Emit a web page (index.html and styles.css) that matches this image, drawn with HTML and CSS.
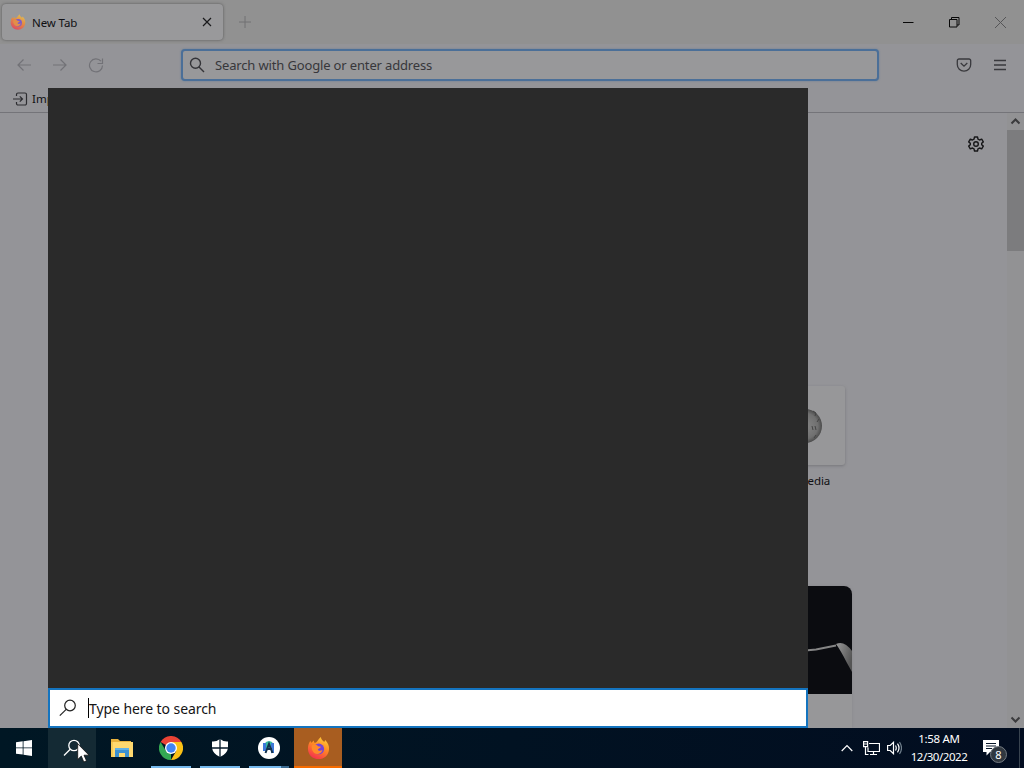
FILE: index.html
```
<!DOCTYPE html>
<html lang="en">
<head>
<meta charset="utf-8">
<title>New Tab</title>
<link rel="stylesheet" href="styles.css">
</head>
<body>
<svg class="defs" width="0" height="0">
  <defs>
    <linearGradient id="flame" x1="0.8" y1="0" x2="0.3" y2="1"><stop offset="0" stop-color="#ffd43b"/><stop offset=".45" stop-color="#ff8a24"/><stop offset="1" stop-color="#f52f4f"/></linearGradient>
    <symbol id="firefox" viewBox="0 0 24 24">
      <path fill="url(#flame)" d="M3.5 4.5c.2 1 .7 1.7 1.2 2.1L7 4.2c.1 1.3.5 2.2 1.2 2.7C10.5 6 11.500 3 14.500 0.500c.2 2.700 2 3.700 3.500 5.200l1-2c3 3.200 4.200 6 4 9.500C22.700 19.200 18 23.600 12 23.600S1 19 1 12.800C1 9.300 2 6.700 3.500 4.500z"/>
      <circle cx="12.300" cy="13" r="5.600" fill="#7544d8"/>
      <path fill="#ff8b2a" d="M5 9.500c3-2 5-.8 6.500.6l3 .6c-.3 1.600-3 1.700-3.300 3.100 1.300 1.900 3.600.9 5 .3-1.200 4-5.600 5.400-8.700 3C5.200 15.300 4.500 12.400 5 9.500z"/>
    </symbol>
  </defs>
</svg>
<div class="screen">
  <main class="browser">
    <div class="tabbar">
      <div class="tab">
        <svg class="tab-icon" width="16" height="16"><use href="#firefox"/></svg>
        <span class="tab-title">New Tab</span>
        <svg class="tab-close" width="10" height="10" viewBox="0 0 10 10"><path d="M1 1l8 8M9 1L1 9"/></svg>
      </div>
      <svg class="tab-add" width="12" height="12" viewBox="0 0 12 12"><path d="M6 0v12M0 6h12"/></svg>
      <div class="window-controls">
        <svg width="11" height="11" viewBox="0 0 11 11"><path d="M0 5.500h10.500"/></svg>
        <svg width="11" height="11" viewBox="0 0 11 11"><path d="M.5 2.500h7.500v7.500H.5zM2.500 2.500V.5H10v7.500H8"/></svg>
        <svg class="faded" width="11" height="11" viewBox="0 0 11 11"><path d="M0 0l11 11M11 0L0 11"/></svg>
      </div>
    </div>
    <div class="navbar">
      <div class="nav-buttons">
        <svg width="16" height="16" viewBox="0 0 16 16"><path d="M15 8H2M7.500 2.500L2 8l5.500 5.500"/></svg>
        <svg width="16" height="16" viewBox="0 0 16 16"><path d="M1 8h13M8.500 2.500L14 8l-5.500 5.500"/></svg>
        <svg width="16" height="16" viewBox="0 0 16 16"><path d="M13 4.200A6.500 6.500 0 1 0 14.500 8.500M14.500 1.500v5h-5"/></svg>
      </div>
      <div class="urlbar">
        <svg width="16" height="16" viewBox="0 0 16 16"><circle cx="6.500" cy="6.300" r="5"/><path d="M10 10l5 5"/></svg>
        <span>Search with Google or enter address</span>
      </div>
      <div class="nav-tools">
        <svg width="16" height="16" viewBox="0 0 16 16"><path d="M3 2h10a1.700 1.700 0 0 1 1.700 1.700V7.500a6.700 6.700 0 0 1-13.400 0V3.700A1.700 1.700 0 0 1 3 2zM4.700 6L8 9.200 11.300 6"/></svg>
        <svg width="16" height="16" viewBox="0 0 16 16"><path d="M2 3.500h12M2 8h12M2 12.500h12"/></svg>
      </div>
    </div>
    <div class="bookmarks">
      <svg width="16" height="16" viewBox="0 0 16 16"><path d="M4.500 5V3.500A1.500 1.500 0 0 1 6 2h7a1.500 1.500 0 0 1 1.500 1.500v9A1.500 1.500 0 0 1 13 14H6a1.500 1.500 0 0 1-1.500-1.500V11M1 8h9.500M7.800 5.300L10.500 8l-2.700 2.700"/></svg>
      <span>Import bookmarks…</span>
    </div>
    <div class="page">
      <div class="content">
        <svg class="gear" width="16" height="16" viewBox="0 0 16 16"><path d="M6.500 1h3l.5 2.200 1.500.8 2.200-.8 1.600 2.700L13.700 7.300v1.400l1.600 1.400-1.600 2.700-2.200-.8-1.500.8-.5 2.200h-3L6 12.800 4.500 12l-2.200.8L.7 10.100l1.600-1.400V7.300L.7 5.900l1.600-2.700 2.200.8L6 3.200z"/><circle cx="8" cy="8" r="2.300"/></svg>
        <div class="site">
          <div class="site-tile">
            <svg width="38" height="36" viewBox="0 0 38 36"><defs><radialGradient id="globe"><stop offset="0" stop-color="#858585"/><stop offset=".75" stop-color="#707070"/><stop offset="1" stop-color="#4b4b4b"/></radialGradient></defs><ellipse cx="19" cy="18" rx="17" ry="17" fill="url(#globe)"/><path d="M27 3l3 2-1 3M26 18l1 4M29 18l1 4M33 11l-2 3M28 30l2-3" stroke="#444" fill="none"/></svg>
          </div>
          <span>wikipedia</span>
        </div>
        <article class="story">
          <svg width="212" height="108" viewBox="0 0 212 108"><defs><linearGradient id="arm" x1="0" y1="0" x2="1" y2=".5"><stop offset="0" stop-color="#999"/><stop offset="1" stop-color="#555"/></linearGradient></defs><rect width="212" height="108" fill="#0b0c10"/><path d="M160 65l16-1.500 20-4" stroke="#858585" stroke-width="2" fill="none"/><path d="M196 58q8-4 16 7v21l-5-9q-6-12-11-19z" fill="url(#arm)"/></svg>
        </article>
      </div>
      <div class="scrollbar">
        <svg width="17" height="17" viewBox="0 0 17 17"><path d="M4.500 10.500l4-4 4 4"/></svg>
        <div class="thumb"></div>
        <svg width="17" height="17" viewBox="0 0 17 17"><path d="M4.500 6.500l4 4 4-4"/></svg>
      </div>
    </div>
  </main>
  <section class="search-panel">
    <div class="search-results"></div>
    <div class="search-box">
      <svg width="18" height="18" viewBox="0 0 18 18"><circle cx="11" cy="6.500" r="5.300"/><path d="M7.200 10.300L.8 16.700"/></svg>
      <i class="caret"></i><span>Type here to search</span>
    </div>
  </section>
  <footer class="taskbar">
    <div class="task">
      <svg width="16" height="16" viewBox="0 0 16 16" fill="#fff"><path d="M0 2.300L6.700 1.300v6.200H0zM7.500 1.200L16 0v7.500H7.500zM0 8.300h6.700v6.300L0 13.700zM7.500 8.300H16V16l-8.500-1.200z"/></svg>
    </div>
    <div class="task hover">
      <svg width="18" height="18" viewBox="0 0 18 18" fill="none" stroke="#fff" stroke-width="1.300"><circle cx="11" cy="6.500" r="5.200"/><path d="M7.200 10.300L1 16.500"/></svg>
      <svg class="cursor" width="13" height="20" viewBox="0 0 13 20"><path d="M.7.800v15.700l3.600-3.400 2.500 5.900 2.700-1.200-2.500-5.600h5z" fill="#fff" stroke="#111" stroke-width=".8"/></svg>
    </div>
    <div class="task explorer">
      <svg width="22" height="20" viewBox="0 0 22 20"><path fill="#e9b23c" d="M0 1h7l2 2h11v3H0z"/><path fill="#ffd96f" d="M0 4h22v15H0z"/><path fill="#f7ca55" d="M0 4h2v15H0z"/><path fill="#3d91d0" d="M4 19v-8h14v8h-4v-4H8v4z"/><path fill="#62b2e5" d="M4 10h14v2H4z"/></svg>
    </div>
    <div class="task running">
      <svg width="24" height="24" viewBox="0 0 24 24"><path fill="#e94335" d="M12 12L1.600 6A12 12 0 0 1 22.400 6z"/><path fill="#34a853" d="M12 12v12A12 12 0 0 1 1.600 6L7 15z"/><path fill="#fbc116" d="M12 6h10.400A12 12 0 0 1 12 24l5.200-9z"/><circle cx="12" cy="12" r="6" fill="#fff"/><circle cx="12" cy="12" r="4.700" fill="#4285f4"/></svg>
    </div>
    <div class="task running">
      <svg width="18" height="20" viewBox="0 0 18 20"><path fill="#fff" d="M9 1q4 3 8 2.500V10q-1 6-8 9-7-3-8-9V3.500Q5 4 9 1z"/><path d="M9 1v18M1 10h16" stroke="#071b2b" stroke-width="1.300"/></svg>
    </div>
    <div class="task running grouped">
      <svg width="22" height="22" viewBox="0 0 22 22"><circle cx="11" cy="11" r="11" fill="#fff"/><path fill="#36b8a0" d="M6 7q5-6 10 0v6H6z"/><path fill="#3d78d8" d="M5 6h3v8H5zM13 6h3v10h-3z"/><path d="M7.500 16L11 7l3.500 9M9 12h5" fill="none" stroke="#14324c" stroke-width="2"/></svg>
    </div>
    <div class="task active">
      <svg width="23" height="24"><use href="#firefox"/></svg>
    </div>
    <div class="tray">
      <svg class="chevron" width="12" height="8" viewBox="0 0 12 8"><path d="M.7 7L6 1.500 11.300 7"/></svg>
      <svg class="network" width="17" height="15" viewBox="0 0 17 15"><path d="M6 2.500h10.500v8H5V6.500M10.500 10.500v3M7 13.500h7M.6.600h4v5h-4zM2.500 5.600v7.900h3M1 3h3"/></svg>
      <svg class="volume" width="15" height="14" viewBox="0 0 15 14"><path d="M.6 4.500h2.600L6.500 1.300v11.400L3.200 9.500H.6zM8.500 4.500q1.500 2.500 0 5M10.500 2.700q3 4.300 0 8.600"/><path class="dim" d="M12.500 1q4 6 0 12"/></svg>
      <div class="clock"><span class="time">1:58 AM</span><span class="date">12/30/2022</span></div>
      <div class="notifications">
        <svg width="17" height="17" viewBox="0 0 17 17"><path fill="#fff" d="M0 0h16v12H7l-3.500 3.500V12H0z"/><path d="M3 3.500h10M3 6h10M3 8.500h6" stroke="#08172a" stroke-width="1.200"/></svg>
        <span class="badge">8</span>
      </div>
      <i class="peek"></i>
    </div>
  </footer>
</div>
</body>
</html>
```
FILE: styles.css
```
* { box-sizing: border-box; }
body { margin: 0; overflow: hidden; font-family: "Noto Sans", "Open Sans", sans-serif; }
svg { display: block; flex: none; }
.defs { position: absolute; }
.screen { position: relative; width: 1024px; height: 768px; display: flex; flex-direction: column; overflow: hidden; }
.browser { height: 728px; display: flex; flex-direction: column; background: #949498; color: #101013; }

.tabbar { height: 44px; display: flex; align-items: center; background: #919191; padding-left: 2px; }
.tab { width: 221px; height: 36px; display: flex; align-items: center; padding: 0 11px 0 8px; border-radius: 4px; background: #99999b; box-shadow: 0 0 3px #555; }
.tab-icon { opacity: .72; }
.tab-title { margin-left: 6px; font-size: 11.5px; letter-spacing: -.1px; flex: 1; }
.tab-close { stroke: #1a1a1c; stroke-width: 1.2; }
.tab-add { margin-left: 16px; stroke: #707072; }
.window-controls { margin-left: auto; padding-right: 18px; display: flex; gap: 35px; fill: none; stroke: #080808; }
.window-controls .faded { stroke: #555557; }

.navbar { height: 41px; display: flex; align-items: center; padding: 0 16px; }
.nav-buttons { width: 165px; display: flex; gap: 20px; fill: none; stroke: #727277; stroke-width: 1.2; }
.urlbar { width: 698px; height: 32px; display: flex; align-items: center; padding-left: 6px; border: 2px solid #4b6f98; border-radius: 4px; background: #98989a; color: #37373b; font-size: 13px; letter-spacing: -.15px; box-shadow: 0 0 2px #627c98; }
.urlbar svg { fill: none; stroke: #343438; stroke-width: 1.4; }
.urlbar span { margin-left: 10px; }
.nav-tools { margin-left: auto; display: flex; gap: 20px; fill: none; stroke: #39393d; stroke-width: 1.3; }

.bookmarks { height: 28px; display: flex; align-items: center; padding-left: 12px; gap: 4px; border-bottom: 1px solid #747479; font-size: 11.5px; }
.bookmarks svg { fill: none; stroke: #2c2c30; stroke-width: 1.2; }
.page { flex: 1; display: flex; min-height: 0; }
.content { flex: 1; display: flex; flex-direction: column; align-items: flex-start; overflow: hidden; }
.gear { margin: 23px 0 0 968px; fill: none; stroke: #171719; stroke-width: 1.4; stroke-linejoin: round; }
.site { width: 80px; margin: 234px 0 0 765px; display: flex; flex-direction: column; align-items: center; font-size: 11.5px; }
.site-tile { width: 80px; height: 79px; display: grid; place-items: center; border-radius: 3px; background: #979799; box-shadow: 0 1px 3px #77777b; }
.site span { margin-top: 8px; line-height: 16px; letter-spacing: -.1px; }
.story { width: 212px; flex: 1; margin: 97px 0 0 640px; overflow: hidden; border-radius: 8px 8px 0 0; background: #979799; box-shadow: 0 0 3px #88888c; }
.scrollbar { width: 17px; display: flex; flex-direction: column; background: #929294; fill: none; stroke: #3b3b3d; stroke-width: 2; }
.thumb { height: 121px; margin-bottom: auto; background: #7c7c7e; }

.search-panel { position: absolute; left: 48px; top: 88px; width: 760px; height: 640px; display: flex; flex-direction: column; }
.search-results { flex: 1; background: #2a2a2a; }
.search-box { height: 40px; display: flex; align-items: center; border: 2px solid #1474bf; padding-left: 9px; background: #fff; color: #151515; font-size: 14px; letter-spacing: -.08px; }
.search-box svg { fill: none; stroke: #222; stroke-width: 1.2; }
.caret { width: 1px; height: 20px; margin-left: 11px; background: #000; }

.taskbar { height: 40px; display: flex; background: linear-gradient(90deg, #001724, #020d20); color: #fff; }
.task { width: 48px; height: 40px; margin-right: 1px; display: grid; place-items: center; position: relative; }
.task:first-child { margin-right: 0; }
.hover { background: #142a34; }
.cursor { position: absolute; left: 29px; top: 15px; }
.explorer { margin-left: 1px; }
.running { box-shadow: inset 0 -2px #76b9ed; clip-path: inset(0 4px); }
.grouped { background: linear-gradient(#3b6b91, #3b6b91) right 4px bottom / 8px 2px no-repeat; box-shadow: none; }
.grouped::after { content: ""; position: absolute; left: 4px; bottom: 0; width: 32px; height: 2px; background: #76b9ed; }
.active { background: #a85d20; box-shadow: inset 0 -2px #f56b00; }
.tray { margin-left: auto; display: flex; align-items: center; }
.tray > svg { fill: none; stroke: #fff; stroke-width: 1.2; }
.network { margin-left: 10px; }
.volume { margin-left: 7px; }
.volume .dim { stroke: #71808d; }
.clock { width: 60px; margin-left: 7px; display: flex; flex-direction: column; align-items: center; font-size: 11.5px; line-height: 18px; letter-spacing: -.3px; }
.date { letter-spacing: -.45px; }
.notifications { position: relative; width: 24px; height: 24px; margin-left: 14px; padding-top: 4px; }
.badge { position: absolute; left: 7px; top: 10px; width: 17px; height: 17px; border: 1px solid #747b82; border-radius: 50%; background: #303840; font-size: 11px; line-height: 15px; text-align: center; }
.peek { width: 1px; height: 40px; margin: 0 4px 0 12px; background: #38434f; }
```
